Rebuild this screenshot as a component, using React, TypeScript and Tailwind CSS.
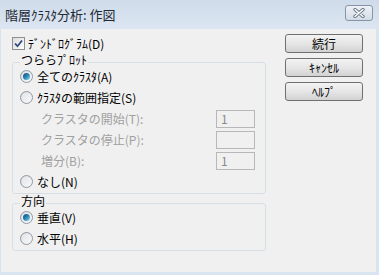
import React from "react"

const font = { fontFamily: '"Noto Sans CJK JP", "Noto Sans", sans-serif' }

const Radio = ({ checked }: { checked?: boolean }) => (
  <div className="w-[13px] h-[13px] rounded-full border border-[#8e9aa6] bg-gradient-to-br from-[#d6d9dd] to-[#fbfbfb] flex items-center justify-center shrink-0">
    <div className="w-[9px] h-[9px] rounded-full bg-gradient-to-br from-[#e4e6e8] to-[#f7f7f7] flex items-center justify-center">
      {checked && (
        <div className="w-[7px] h-[7px] rounded-full bg-gradient-to-br from-[#0f4a70] via-[#2a86b5] to-[#8fdcf6]" />
      )}
    </div>
  </div>
)

const RadioRow = ({ label, checked }: { label: string; checked?: boolean }) => (
  <div className="h-[21px] flex items-center gap-[4px] pl-[7px]">
    <Radio checked={checked} />
    <span className="text-[12px] leading-[14px] text-black">{label}</span>
  </div>
)

const FieldRow = ({ label, value }: { label: string; value?: string }) => (
  <div className="h-[21px] flex items-center pl-[28px] pr-[10px]">
    <span className="text-[12px] leading-[14px] text-[#a0a0a0] flex-1">{label}</span>
    <div className="w-[39px] h-[18px] border border-[#b8b8b8] bg-[#f0f0f0] flex items-center pl-[4px] text-[12px] text-[#8a8a8a]">
      {value}
    </div>
  </div>
)

const Group = ({ title, children }: { title: string; children: React.ReactNode }) => (
  <div className="border border-[#d5dfe5] rounded-[3px] pb-[1px]">
    <div className="-mt-[9px] ml-[7px] w-fit px-[1px] bg-[#f0f0f0] text-[12px] leading-[12px] text-black">{title}</div>
    {children}
  </div>
)

const Btn = ({ label }: { label: string }) => (
  <div className="w-[78px] h-[19px] rounded-[3px] border border-[#707070] bg-gradient-to-b from-[#f3f3f3] via-[#e6e6e6] to-[#d2d2d2] flex items-center justify-center text-[12px] text-black">
    {label}
  </div>
)

export default function App() {
  return (
    <div className="w-[379px] h-[275px] flex flex-col bg-[#d9e4f1] overflow-hidden" style={font}>
      <div className="h-[29px] flex items-center justify-between pl-[5px] pr-[6px] bg-gradient-to-b from-[#cfdbea] to-[#dce6f2]">
        <span className="text-[13px] text-[#1e2a36]">階層ｸﾗｽﾀ分析: 作図</span>
        <div className="w-[28px] h-[16px] -mt-[4px] rounded-[3px] border border-[#8794a8] bg-gradient-to-b from-[#eef2f7] to-[#d2dbe6] flex items-center justify-center">
          <svg width="14" height="10" viewBox="0 0 14 10">
            <path d="M3 1.5 L11 8.5 M11 1.5 L3 8.5" stroke="#6f7b8b" strokeWidth="3.4" strokeLinecap="round" />
            <path d="M3 1.5 L11 8.5 M11 1.5 L3 8.5" stroke="#ffffff" strokeWidth="1.4" strokeLinecap="round" />
          </svg>
        </div>
      </div>

      <div className="flex-1 ml-[1px] mr-[3px] mb-[3px] bg-[#f0f0f0] flex">
        <div className="w-[265px] pl-[11px] pt-[8px]">
          <div className="h-[13px] flex items-center gap-[3px]">
            <div className="w-[13px] h-[13px] border border-[#8e8f8f] bg-gradient-to-br from-[#dcdcdc] to-[#fdfdfd] flex items-center justify-center">
              <svg width="9" height="9" viewBox="0 0 9 9">
                <path d="M1 4.5 L3.5 7.2 L8 1.5" fill="none" stroke="#2d4a82" strokeWidth="1.8" />
              </svg>
            </div>
            <span className="text-[12px] leading-[12px] text-black">ﾃﾞﾝﾄﾞﾛｸﾞﾗﾑ(D)</span>
          </div>

          <div className="mt-[12px]">
            <Group title="つららﾌﾟﾛｯﾄ">
              <RadioRow label="全てのｸﾗｽﾀ(A)" checked />
              <RadioRow label="ｸﾗｽﾀの範囲指定(S)" />
              <FieldRow label="クラスタの開始(T):" value="1" />
              <FieldRow label="クラスタの停止(P):" />
              <FieldRow label="増分(B):" value="1" />
              <RadioRow label="なし(N)" />
            </Group>
          </div>

          <div className="mt-[9px]">
            <Group title="方向">
              <RadioRow label="垂直(V)" checked />
              <RadioRow label="水平(H)" />
            </Group>
          </div>
        </div>

        <div className="pl-[19px] pt-[5px] flex flex-col gap-[5px]">
          <Btn label="続行" />
          <Btn label="ｷｬﾝｾﾙ" />
          <Btn label="ﾍﾙﾌﾟ" />
        </div>
      </div>
    </div>
  )
}
